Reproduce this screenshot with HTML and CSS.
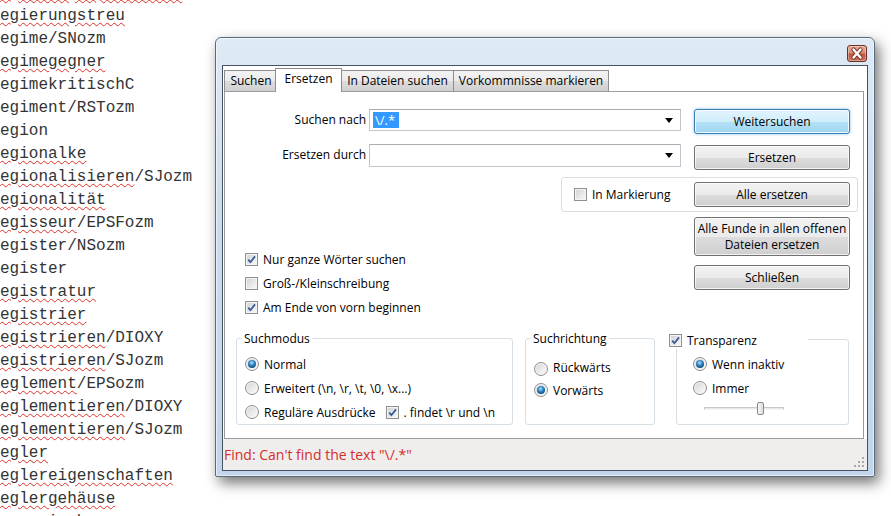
FILE: index.html
```html
<!DOCTYPE html>
<html lang="de">
<head>
    <meta charset="UTF-8">
    <title>Ersetzen</title>
    <link rel="stylesheet" href="styles.css">
</head>
<body>
    <div class="editor">
        <div><span class="err">Regierungssprecherin</span></div>
        <div><span class="err">Regierungstreu</span></div>
        <div>Regime/SNozm</div>
        <div><span class="err">Regimegegner</span></div>
        <div>RegimekritischC</div>
        <div>Regiment/RSTozm</div>
        <div>Region</div>
        <div><span class="err">Regionalke</span></div>
        <div><span class="err">Regionalisieren</span>/SJozm</div>
        <div><span class="err">Regionalität</span></div>
        <div><span class="err">Regisseur</span>/EPSFozm</div>
        <div>Register/NSozm</div>
        <div>Register</div>
        <div><span class="err">Registratur</span></div>
        <div><span class="err">Registrier</span></div>
        <div><span class="err">Registrieren</span>/DIOXY</div>
        <div><span class="err">Registrieren</span>/SJozm</div>
        <div><span class="err">Reglement</span>/EPSozm</div>
        <div><span class="err">Reglementieren</span>/DIOXY</div>
        <div><span class="err">Reglementieren</span>/SJozm</div>
        <div><span class="err">Regler</span></div>
        <div><span class="err">Reglereigenschaften</span></div>
        <div><span class="err">Reglergehäuse</span></div>
        <div>Regnerisch</div>
    </div>

    <div class="window">
        <div class="titlebar">
            <span class="close">
                <svg width="18" height="15" viewBox="0 0 18 15">
                    <path d="M5.5 3.5 L12.5 11.5 M12.5 3.5 L5.5 11.5" stroke="#7a3428" stroke-width="4.2" stroke-linecap="round"/>
                    <path d="M5.5 3.5 L12.5 11.5 M12.5 3.5 L5.5 11.5" stroke="#ffffff" stroke-width="2.4" stroke-linecap="round"/>
                </svg>
            </span>
        </div>
        <div class="client">
            <div class="tabs">
                <div class="tab tab-find">Suchen</div>
                <div class="tab active">Ersetzen</div>
                <div class="tab tab-files">In Dateien suchen</div>
                <div class="tab tab-mark">Vorkommnisse markieren</div>
            </div>
            <div class="panel">
                <div class="row">
                    <label class="field-label">Suchen nach</label>
                    <div class="combo"><span class="sel">\/.*</span><span class="arrow"></span></div>
                    <button class="btn default">Weitersuchen</button>
                </div>
                <div class="row row-second">
                    <label class="field-label">Ersetzen durch</label>
                    <div class="combo combo-tall"><span class="arrow"></span></div>
                    <button class="btn">Ersetzen</button>
                </div>
                <div class="selection-box">
                    <span class="opt"><span class="cb"></span>In Markierung</span>
                    <button class="btn">Alle ersetzen</button>
                </div>
                <div class="middle">
                    <div class="options">
                        <div class="opt">
                            <span class="cb"><svg width="11" height="11" viewBox="0 0 11 11"><path d="M2.2 5.6 L4.4 8.2 L9 2.4" fill="none" stroke="#3b5a98" stroke-width="1.8"/></svg></span>Nur ganze Wörter suchen
                        </div>
                        <div class="opt"><span class="cb"></span>Groß-/Kleinschreibung</div>
                        <div class="opt">
                            <span class="cb"><svg width="11" height="11" viewBox="0 0 11 11"><path d="M2.2 5.6 L4.4 8.2 L9 2.4" fill="none" stroke="#3b5a98" stroke-width="1.8"/></svg></span>Am Ende von vorn beginnen
                        </div>
                    </div>
                    <div class="side-buttons">
                        <button class="btn btn-tall">Alle Funde in allen offenen<br>Dateien ersetzen</button>
                        <button class="btn">Schließen</button>
                    </div>
                </div>
                <div class="groups">
                    <fieldset class="group group-mode">
                        <legend>Suchmodus</legend>
                        <div class="opt"><span class="rb checked"></span>Normal</div>
                        <div class="opt"><span class="rb"></span>Erweitert (\n, \r, \t, \0, \x...)</div>
                        <div class="opt">
                            <span class="rb"></span>Reguläre Ausdrücke
                            <span class="cb cb-inline"><svg width="11" height="11" viewBox="0 0 11 11"><path d="M2.2 5.6 L4.4 8.2 L9 2.4" fill="none" stroke="#3b5a98" stroke-width="1.8"/></svg></span>. findet \r und \n
                        </div>
                    </fieldset>
                    <fieldset class="group group-dir">
                        <legend>Suchrichtung</legend>
                        <div class="opt opt-low"><span class="rb"></span>Rückwärts</div>
                        <div class="opt"><span class="rb checked"></span>Vorwärts</div>
                    </fieldset>
                    <fieldset class="group group-trans">
                        <legend class="legend-check">
                            <span class="cb"><svg width="11" height="11" viewBox="0 0 11 11"><path d="M2.2 5.6 L4.4 8.2 L9 2.4" fill="none" stroke="#3b5a98" stroke-width="1.8"/></svg></span>Transparenz
                        </legend>
                        <div class="opt"><span class="rb checked"></span>Wenn inaktiv</div>
                        <div class="opt"><span class="rb"></span>Immer</div>
                        <div class="slider"><span class="thumb"></span></div>
                    </fieldset>
                </div>
            </div>
            <div class="status">
                <span class="status-text">Find: Can't find the text "\/.*"</span>
                <svg class="grip" width="11" height="11" viewBox="0 0 11 11" fill="#a8a8a8">
                    <rect x="8" y="0" width="2" height="2"/>
                    <rect x="4" y="4" width="2" height="2"/>
                    <rect x="8" y="4" width="2" height="2"/>
                    <rect x="0" y="8" width="2" height="2"/>
                    <rect x="4" y="8" width="2" height="2"/>
                    <rect x="8" y="8" width="2" height="2"/>
                </svg>
            </div>
        </div>
    </div>
</body>
</html>
```

FILE: styles.css
```css
body {
    margin: 0;
    background: #ffffff;
    font-family: "Open Sans", "Noto Sans", sans-serif;
    font-size: 12px;
    color: #000;
    overflow: hidden;
    width: 891px;
    height: 516px;
    position: relative;
}

/* Editor im Hintergrund */
.editor {
    font-family: "Liberation Mono", monospace;
    font-size: 16px;
    line-height: 23px;
    color: #333333;
    white-space: nowrap;
    margin: -18px 0 0 -9.6px;
}
.err {
    text-decoration: underline wavy #e0302a;
    text-decoration-thickness: 1px;
    text-underline-offset: 2px;
}

/* Fenster */
.window {
    position: absolute;
    left: 215px;
    top: 37px;
    width: 660px;
    height: 440px;
    box-sizing: border-box;
    border: 1px solid #5b6978;
    border-radius: 6px 6px 2px 2px;
    background: linear-gradient(to bottom, #dfeaf6 0%, #cbdcef 40%, #c1d5eb 100%);
    box-shadow: inset 0 0 0 1px rgba(255, 255, 255, 0.6), 4px 6px 14px rgba(0, 0, 0, 0.55);
    display: flex;
    flex-direction: column;
}
.titlebar {
    height: 27px;
    box-sizing: border-box;
    padding: 7px 7px 0 0;
    display: flex;
    justify-content: flex-end;
    align-items: flex-start;
}
.close {
    width: 20px;
    height: 17px;
    box-sizing: border-box;
    border: 1px solid #6d3026;
    border-radius: 3px;
    background: linear-gradient(to bottom, #e8a897 0%, #d98a75 45%, #c0573f 55%, #c9735b 100%);
    box-shadow: inset 0 0 0 1px rgba(255, 255, 255, 0.35);
    display: flex;
    align-items: center;
    justify-content: center;
}
.client {
    flex: 1;
    margin: 0 6px 5px;
    border: 1px solid #45525f;
    background: #ffffff;
    display: flex;
    flex-direction: column;
}

/* Reiter */
.tabs {
    display: flex;
    align-items: flex-end;
    margin: 2px 0 0 1px;
    height: 23px;
}
.tab {
    height: 21px;
    box-sizing: border-box;
    line-height: 19px;
    text-align: center;
    border: 1px solid #8c8e94;
    border-bottom: none;
    margin-right: -1px;
    background: linear-gradient(to bottom, #f3f3f3 0%, #ebebeb 50%, #dddddd 51%, #cfcfcf 100%);
}
.tab-find {
    width: 54px;
}
.tab-files {
    width: 113px;
}
.tab-mark {
    width: 156px;
}
.tab.active {
    width: 67px;
    height: 24px;
    margin: 0 -2px -1px -2px;
    line-height: 20px;
    background: #ffffff;
    position: relative;
    z-index: 1;
}
.tab.active + .tab {
    margin-left: 1px;
}

.panel {
    margin: 0 3px 0 1px;
    height: 348px;
    box-sizing: border-box;
    border: 1px solid #9a9ca3;
    padding: 17px 13px 0 0;
}

/* Eingabezeilen */
.row {
    display: flex;
    align-items: flex-start;
}
.row-second {
    margin-top: 10px;
}
.field-label {
    width: 141px;
    text-align: right;
    line-height: 22px;
}
.combo {
    width: 312px;
    height: 22px;
    margin-left: 3px;
    box-sizing: border-box;
    border: 1px solid #c2c5cb;
    border-top-color: #abadb3;
    padding: 2px 3px;
    display: flex;
    align-items: center;
}
.combo-tall {
    height: 23px;
}
.sel {
    background: #3399ff;
    color: #fff;
    font-size: 13px;
    line-height: 16px;
    padding: 0 4px 0 2px;
}
.arrow {
    margin-left: auto;
    margin-right: 4px;
    width: 0;
    height: 0;
    border-left: 4px solid transparent;
    border-right: 4px solid transparent;
    border-top: 5px solid #000;
}

/* Buttons */
.btn {
    width: 156px;
    height: 25px;
    margin-left: auto;
    padding: 0;
    font: inherit;
    color: #000;
    border: 1px solid #707070;
    border-radius: 3px;
    background: linear-gradient(to bottom, #f2f2f2 0%, #ebebeb 50%, #dddddd 51%, #cfcfcf 100%);
    box-shadow: inset 0 0 0 1px rgba(255, 255, 255, 0.75);
}
.btn.default {
    border-color: #3c7fb1;
    background: linear-gradient(to bottom, #e3f4fc 0%, #cfedfb 50%, #b4e2f7 51%, #9fd5f1 100%);
    box-shadow: inset 0 0 0 1px rgba(255, 255, 255, 0.8), 0 0 3px rgba(60, 160, 220, 0.7);
}
.row-second .btn {
    margin-top: 1px;
}
.btn-tall {
    height: 39px;
    line-height: 16px;
}

.selection-box {
    margin: 7px 0 0 336px;
    width: 297px;
    height: 35px;
    box-sizing: border-box;
    border: 1px solid #d8dee4;
    border-radius: 3px;
    padding: 0 7px 0 12px;
    display: flex;
    align-items: center;
}

.middle {
    margin-top: 5px;
    display: flex;
    justify-content: space-between;
}
.options {
    padding: 30px 0 0 20px;
}
.side-buttons {
    display: flex;
    flex-direction: column;
    gap: 9px;
}

/* Checkbox und Radio */
.opt {
    display: flex;
    align-items: center;
    height: 24px;
    white-space: nowrap;
}
.selection-box .opt {
    height: auto;
}
.cb {
    width: 13px;
    height: 13px;
    box-sizing: border-box;
    border: 1px solid #8e8f8f;
    background: linear-gradient(135deg, #cdd0d4 0%, #e9eaeb 60%, #f7f7f7 100%);
    box-shadow: inset 0 0 0 1px #f4f4f4;
    margin-right: 5px;
    display: flex;
    align-items: center;
    justify-content: center;
    flex: none;
}
.cb-inline {
    margin-left: 10px;
}
.rb {
    width: 14px;
    height: 14px;
    box-sizing: border-box;
    border-radius: 50%;
    border: 1px solid #8e8f8f;
    background: linear-gradient(135deg, #d0d2d5 0%, #eeeeee 60%, #fbfbfb 100%);
    box-shadow: inset 0 0 0 1px #f6f6f6;
    margin-right: 5px;
    display: flex;
    align-items: center;
    justify-content: center;
    flex: none;
}
.rb.checked::after {
    content: "";
    width: 8px;
    height: 8px;
    border-radius: 50%;
    background: radial-gradient(circle at 45% 35%, #b8e4fb 0%, #3a8fcc 35%, #145286 70%, #0b3462 100%);
}

/* Gruppen */
.groups {
    display: flex;
    margin: 11px 0 0 11px;
}
.group {
    margin: 0;
    padding: 5px 8px 0 8px;
    border: 1px solid #d5dfe5;
    border-radius: 3px;
    min-inline-size: 0;
    box-sizing: border-box;
}
.group legend {
    padding: 0 2px;
    margin-left: -3px;
    line-height: 17px;
}
.group-mode {
    width: 277px;
}
.group-dir {
    width: 130px;
    margin-left: 12px;
}
.opt-low {
    height: 26px;
    align-items: flex-end;
    padding-bottom: 2px;
    box-sizing: border-box;
}
.group-trans {
    width: 173px;
    margin-left: 21px;
    padding-top: 3px;
    padding-left: 16px;
}
.group-trans .legend-check {
    display: flex;
    align-items: center;
    width: 139px;
    height: 19px;
    box-sizing: border-box;
    margin-left: -24px;
    padding: 2px 0 0 0;
}
.slider {
    width: 80px;
    height: 3px;
    margin: 7px 0 0 11px;
    box-sizing: border-box;
    border: 1px solid #c9c9c9;
    border-bottom-color: #f4f4f4;
    background: #e7eaea;
    position: relative;
}
.thumb {
    position: absolute;
    left: 52px;
    top: -6px;
    width: 7px;
    height: 13px;
    box-sizing: border-box;
    border: 1px solid #8a8a8a;
    border-radius: 2px;
    background: linear-gradient(to right, #f8f8f8, #dcdcdc);
}

/* Statuszeile */
.status {
    flex: 1;
    background: #f0eeed;
    display: flex;
    align-items: center;
    padding-left: 1px;
}
.status-text {
    color: #d22f2b;
    font-size: 14px;
}
.grip {
    margin: auto 2px 2px auto;
    align-self: flex-end;
}
```
